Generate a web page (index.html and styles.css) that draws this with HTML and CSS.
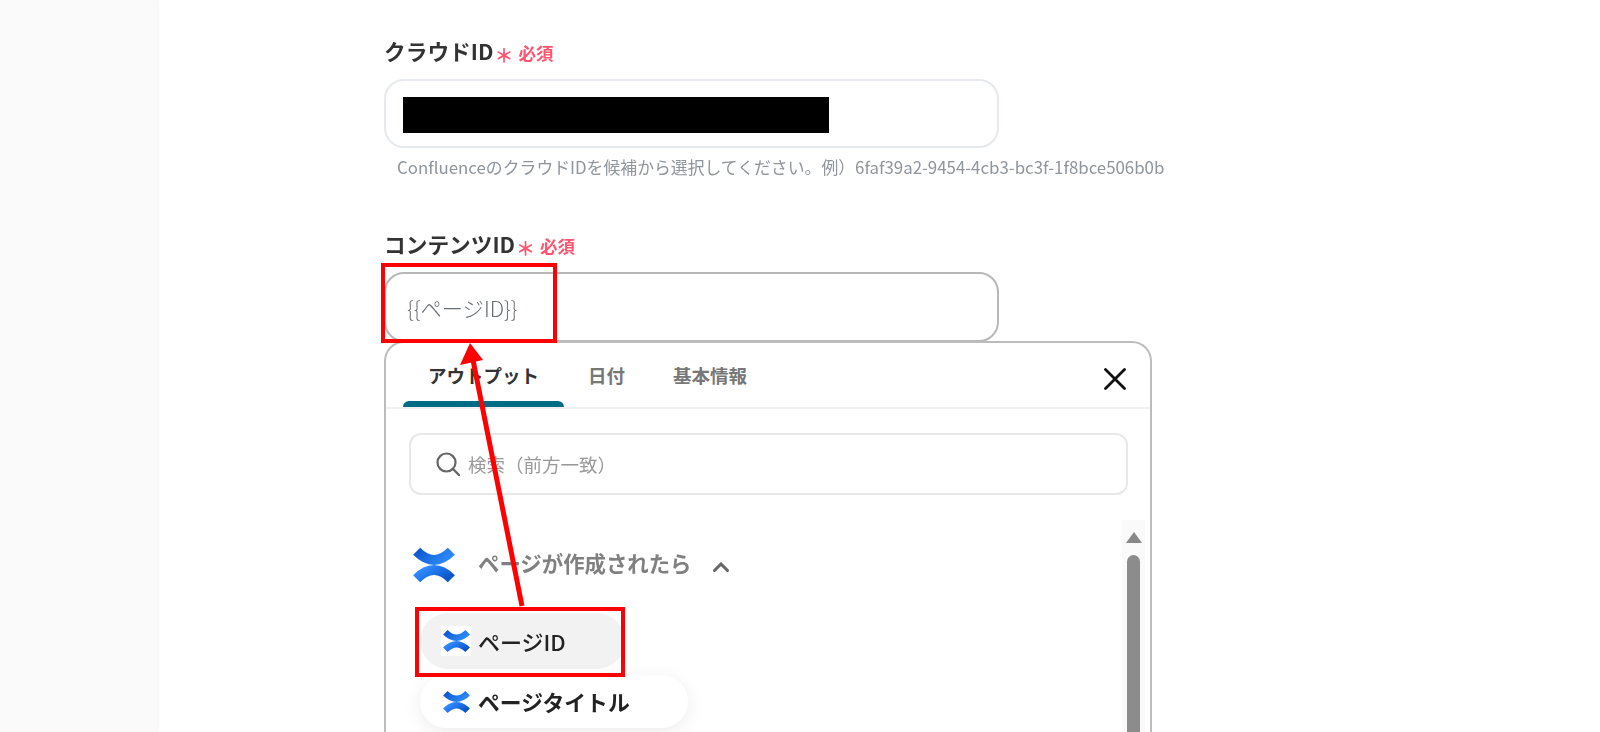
FILE: index.html
```html
<!DOCTYPE html>
<html lang="ja">
<head>
<meta charset="utf-8">
<title>コンテンツID</title>
<link rel="stylesheet" href="styles.css">
</head>
<body>
<svg class="defs" width="0" height="0" aria-hidden="true">
  <defs>
    <linearGradient id="cfTop" x1="0" y1="0" x2="1" y2="0.3">
      <stop offset="0" stop-color="#0b57cf"/>
      <stop offset="1" stop-color="#2b86f5"/>
    </linearGradient>
    <linearGradient id="cfBottom" x1="0" y1="0.3" x2="1" y2="0.7">
      <stop offset="0" stop-color="#2f8cff"/>
      <stop offset="1" stop-color="#0b55c9"/>
    </linearGradient>
    <symbol id="cf" viewBox="-3 -3 126 116">
      <path fill="none" stroke="url(#cfTop)" stroke-width="30" d="M8 14Q60 66 112 14"/>
      <path fill="none" stroke="url(#cfBottom)" stroke-width="30" d="M8 96Q60 44 112 96"/>
    </symbol>
  </defs>
</svg>
<div class="page">
  <aside class="sidebar"></aside>
  <main class="main">
    <div class="field-label">クラウドID<span class="req-mark">＊</span><span class="req-text">必須</span></div>
    <div class="input input-light"><div class="redacted"></div></div>
    <p class="hint">ConfluenceのクラウドIDを候補から選択してください。例）6faf39a2-9454-4cb3-bc3f-1f8bce506b0b</p>

    <div class="field-label second">コンテンツID<span class="req-mark">＊</span><span class="req-text">必須</span></div>
    <div class="input input-dark"><span class="input-value">{{ページID}}</span></div>

    <section class="popup">
      <div class="tabs">
        <div class="tab active"><span class="tab-text">アウトプット</span><span class="tab-bar"></span></div>
        <div class="tab"><span class="tab-text">日付</span><span class="tab-bar"></span></div>
        <div class="tab"><span class="tab-text">基本情報</span><span class="tab-bar"></span></div>
        <svg class="close" viewBox="0 0 22 22" width="22" height="22"><path d="M1.500 1.500 20.500 20.500M20.500 1.500 1.500 20.500" fill="none" stroke="#111" stroke-width="2.800" stroke-linecap="round"/></svg>
      </div>
      <div class="search">
        <svg class="search-icon" viewBox="0 0 24 24" width="24" height="24"><circle cx="10.500" cy="10.500" r="9" fill="none" stroke="#666" stroke-width="2.200"/><path d="M17 17l6 6" stroke="#666" stroke-width="2.400" stroke-linecap="round"/></svg>
        <span class="search-text">検索（前方一致）</span>
      </div>
      <div class="results">
        <div class="list">
          <div class="group">
            <svg class="group-icon"><use href="#cf"/></svg>
            <span class="group-text">ページが作成されたら</span>
            <svg class="chevron" viewBox="0 0 16 10" width="16" height="10"><path d="M1.500 8.500 8 2l6.500 6.500" fill="none" stroke="#666" stroke-width="3" stroke-linecap="round"/></svg>
          </div>
          <div class="pill pill-selected">
            <span class="pill-icon-box"><svg class="pill-icon"><use href="#cf"/></svg></span>
            <span>ページID</span>
          </div>
          <div class="pill pill-plain">
            <svg class="pill-icon"><use href="#cf"/></svg>
            <span>ページタイトル</span>
          </div>
        </div>
        <div class="scrollbar">
          <span class="scroll-arrow"></span>
          <span class="scroll-thumb"></span>
        </div>
      </div>
    </section>
  </main>
</div>
<div class="mark mark-input"></div>
<div class="mark mark-pill"></div>
<svg class="arrow" viewBox="0 0 1600 732" width="1600" height="732" aria-hidden="true">
  <line x1="522" y1="606" x2="473" y2="360" stroke="#ff0000" stroke-width="5"/>
  <polygon points="470,343 460,365 483,360" fill="#ff0000"/>
</svg>
</body>
</html>
```
FILE: styles.css
```css
* { box-sizing: border-box; }
html, body {
  margin: 0;
  height: 732px;
  overflow: hidden;
  background: #fff;
}
body {
  font-family: "Noto Sans CJK JP", "Noto Sans", sans-serif;
  color: #222;
  position: relative;
}
.defs { position: absolute; }
.page { display: flex; height: 732px; filter: blur(0.35px); }
.sidebar {
  width: 157px;
  flex: none;
  background: #fafafa;
  box-shadow: 1px 0 3px rgba(0, 0, 0, .06);
}
.main {
  flex: none;
  width: 1000px;
  padding: 38px 0 0 227px;
}
.field-label {
  height: 28px;
  line-height: 26px;
  font-size: 21.700px;
  font-weight: 700;
  color: #333;
  margin-bottom: 13px;
  white-space: nowrap;
}
.field-label.second { margin-top: 52px; }
.req-mark {
  color: #ff5470;
  font-size: 19px;
  font-weight: 700;
  margin-left: 1px;
  vertical-align: -3px;
}
.req-text {
  color: #ff5470;
  font-size: 17.500px;
  font-weight: 700;
  margin-left: 5px;
}
.input {
  width: 615px;
  border-radius: 20px;
  background: #fff;
  display: flex;
  align-items: center;
}
.input-light {
  height: 69px;
  border: 2px solid #e6e9ee;
  padding: 2px 0 0 17px;
}
.input-dark {
  height: 70px;
  border: 2px solid #b8b8b8;
  padding: 0 0 0 21px;
}
.redacted { width: 426px; height: 36px; background: #000; }
.hint {
  margin: 7px 0 0 13px;
  height: 24px;
  line-height: 24px;
  font-size: 16.850px;
  color: #8f959c;
  white-space: nowrap;
}
.input-value { font-size: 21.300px; font-weight: 300; color: #6a6f74; }
.popup {
  position: relative;
  width: 768px;
  height: 420px;
  margin-top: -1px;
  border: 2px solid #bdbdbd;
  border-bottom: 0;
  border-radius: 20px 20px 0 0;
  background: #fff;
}
.tabs {
  display: flex;
  height: 66px;
  padding: 0 24px 0 17px;
  border-bottom: 2px solid #f0f1f2;
}
.tab { display: flex; flex-direction: column; padding: 0 24px; }
.tab.active { padding: 0 25px; }
.tab-text {
  flex: 1;
  display: flex;
  align-items: center;
  padding-top: 6px;
  font-size: 18.500px;
  font-weight: 700;
  color: #777;
}
.tab.active .tab-text { color: #333; }
.tab-bar { height: 6px; margin: 0 -25px; border-radius: 6px 6px 0 0; }
.tab.active .tab-bar { background: #006b85; }
.close { margin: 25px 0 0 auto; }
.search {
  display: flex;
  align-items: center;
  gap: 8px;
  height: 62px;
  margin: 24px 22px 0 23px;
  padding-left: 25px;
  border: 2px solid #e8e8e8;
  border-radius: 12px;
}
.search-text { font-size: 18.500px; color: #999; }
.results {
  display: flex;
  justify-content: space-between;
  margin-top: 25px;
  height: 212px;
}
.list { padding: 25px 0 0 27px; }
.group { display: flex; align-items: center; height: 40px; }
.group-icon { width: 42px; height: 40px; }
.group-text {
  margin-left: 23px;
  padding-bottom: 6px;
  font-size: 21.400px;
  font-weight: 700;
  color: #808080;
}
.chevron { margin: 4px 0 0 22px; }
.pill {
  display: flex;
  align-items: center;
  margin-left: 7px;
  border-radius: 28px;
  color: #222;
  width: max-content;
}
.pill-selected {
  gap: 7px;
  height: 56px;
  margin-top: 28px;
  padding: 0 59px 0 21px;
  background: #f2f2f2;
  font-size: 22px;
  font-weight: 500;
}
.pill-plain {
  gap: 8px;
  height: 53px;
  margin-top: 6px;
  padding: 0 58px 0 23px;
  background: #fff;
  box-shadow: 0 4px 18px rgba(0, 0, 0, .08);
  font-size: 21.800px;
  font-weight: 700;
}
.pill-icon-box {
  display: flex;
  align-items: center;
  justify-content: center;
  width: 30px;
  height: 30px;
  background: #fff;
}
.pill-icon { width: 27px; height: 26px; }
.scrollbar {
  width: 23px;
  margin-right: 5px;
  background: #fafafa;
  display: flex;
  flex-direction: column;
  align-items: center;
  padding-top: 12px;
}
.scroll-arrow {
  width: 0;
  height: 0;
  border-left: 8px solid transparent;
  border-right: 8px solid transparent;
  border-bottom: 11px solid #888;
}
.scroll-thumb {
  width: 13px;
  height: 300px;
  margin-top: 12px;
  border-radius: 7px 7px 0 0;
  background: #8c8c8c;
}
.mark {
  position: absolute;
  border: 4px solid #ff0000;
}
.mark-input { left: 381px; top: 263px; width: 176px; height: 80px; }
.mark-pill { left: 415px; top: 607px; width: 210px; height: 70px; }
.arrow { position: absolute; left: 0; top: 0; pointer-events: none; }
```
